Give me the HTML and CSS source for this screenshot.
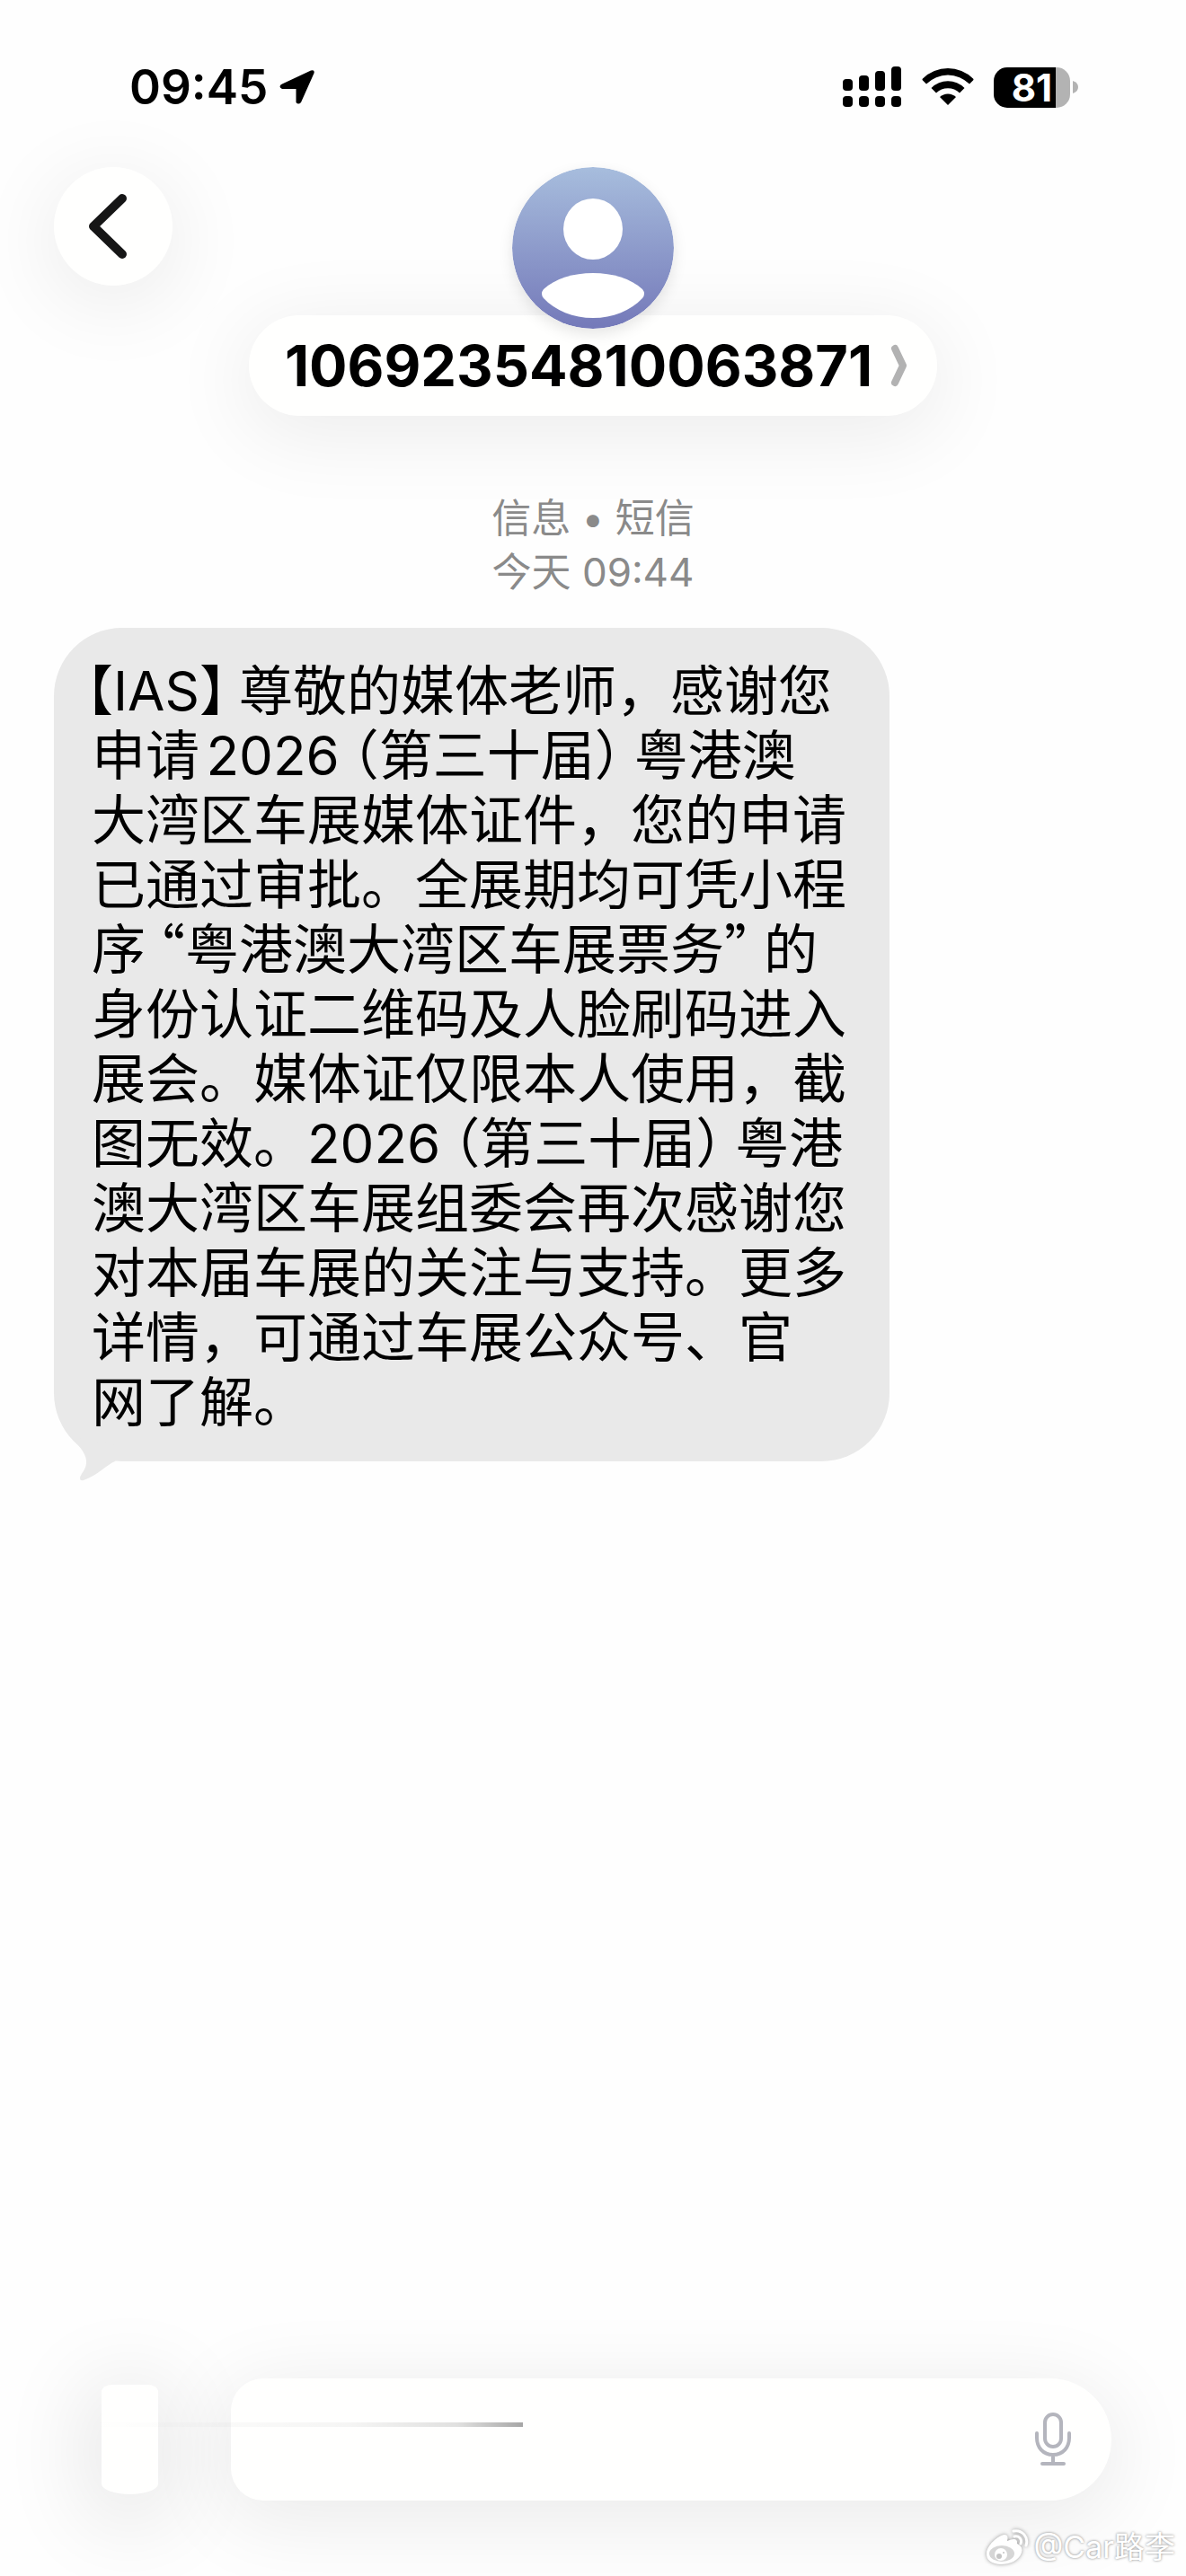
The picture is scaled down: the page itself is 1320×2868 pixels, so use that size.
FILE: index.html
```html
<!DOCTYPE html>
<html lang="zh-CN">
<head>
    <meta charset="UTF-8">
    <meta name="viewport" content="width=device-width, initial-scale=1.0">
    <title>信息</title>
    <link rel="stylesheet" href="styles.css">
</head>
<body>
    <div class="status-bar">
        <div class="status-left">
            <span class="time">09:45</span>
            <svg width="42" height="42" viewBox="0 0 42 42" aria-hidden="true">
                <path d="M4 17.500 36 2.500Q40.500 1 39.500 5.500L25 38Q22 41 19.500 38V23H4Q-1 20 4 17.500Z" fill="#000"/>
            </svg>
        </div>
        <div class="status-right">
            <svg width="66" height="46" viewBox="0 0 66 46" aria-hidden="true">
                <rect x="0" y="14" width="11" height="13" rx="4"/>
                <rect x="18" y="10" width="11" height="17" rx="4"/>
                <rect x="36" y="5" width="11" height="22" rx="4"/>
                <rect x="54" y="0" width="11" height="27" rx="4"/>
                <rect x="0" y="33" width="11" height="12" rx="4"/>
                <rect x="18" y="33" width="11" height="12" rx="4"/>
                <rect x="36" y="33" width="11" height="12" rx="4"/>
                <rect x="54" y="33" width="11" height="12" rx="4"/>
            </svg>
            <svg width="58" height="44" viewBox="0 0 58 44" aria-hidden="true">
                <path d="M1 12.500A40 40 0 0 1 57 12.500Q58 13.500 57 14.500L53 18.500A34 34 0 0 0 5 18.500L1 14.500Q0 13.500 1 12.500Z"/>
                <path d="M10.500 23A26 26 0 0 1 47.500 23L42 28.500A18.500 18.500 0 0 0 16 28.500Z"/>
                <path d="M20 33A13 13 0 0 1 38 33L29 42Z"/>
            </svg>
            <div class="battery">
                <span class="battery-level">81</span>
                <svg width="6" height="14" viewBox="0 0 6 14" aria-hidden="true"><path d="M0 0Q6 2 6 7T0 14Z" fill="#b3b3b3"/></svg>
            </div>
        </div>
    </div>

    <header class="chat-header">
        <button class="back" aria-label="返回">
            <svg width="44" height="74" viewBox="0 0 44 74" aria-hidden="true">
                <path d="M38 6 6 37 38 68" fill="none" stroke="#161616" stroke-width="10" stroke-linecap="round" stroke-linejoin="round"/>
            </svg>
        </button>
        <div class="contact">
            <svg class="avatar" width="180" height="180" viewBox="0 0 180 180" aria-hidden="true">
                <defs>
                    <linearGradient id="avatar-bg" x1="0" y1="0" x2="0" y2="1">
                        <stop offset="0" stop-color="#a7bddd"/>
                        <stop offset="1" stop-color="#7479b9"/>
                    </linearGradient>
                </defs>
                <circle cx="90" cy="90" r="90" fill="url(#avatar-bg)"/>
                <ellipse cx="90" cy="69" rx="33" ry="34" fill="#fff"/>
                <path d="M35 136C48 124 68 118 90 118S132 124 145 136Q149 141 145 146C132 160 112 168 90 168S48 160 35 146Q31 141 35 136Z" fill="#fff"/>
            </svg>
            <button class="contact-name">
                10692354810063871
                <svg width="20" height="48" viewBox="0 0 20 48" aria-hidden="true">
                    <path d="M5 5 14 24 5 43" fill="none" stroke="#b2b2b2" stroke-width="8" stroke-linecap="round" stroke-linejoin="round"/>
                </svg>
            </button>
        </div>
    </header>

    <main class="messages">
        <div class="stamp">信息 • 短信<br>今天 09:44</div>
        <div class="bubble">
            <span class="open hang">【</span>IAS<span class="close">】</span>尊敬的媒体老师，感谢您<br>
            申请2026<span class="open gap">（</span>第三十届<span class="close">）</span>粤港澳<br>
            大湾区车展媒体证件，您的申请<br>
            已通过审批。全展期均可凭小程<br>
            序<span class="open gap quote">“</span>粤港澳大湾区车展票务<span class="close quote">”</span>的<br>
            身份认证二维码及人脸刷码进入<br>
            展会。媒体证仅限本人使用，截<br>
            图无效。2026<span class="open gap">（</span>第三十届<span class="close">）</span>粤港<br>
            澳大湾区车展组委会再次感谢您<br>
            对本届车展的关注与支持。更多<br>
            详情，可通过车展公众号、官<br>
            网了解。
            <svg class="tail" width="56" height="50" viewBox="0 0 56 50" aria-hidden="true">
                <path d="M0 0C7 10 15 16 16 26C17 36 9 41 9 46Q9 49 13 48C30 42 38 31 48 27L56 10Z" fill="#e9e9e9"/>
            </svg>
        </div>
    </main>

    <footer class="composer">
        <button class="attach" aria-label="添加"></button>
        <div class="field">
            <input type="text" aria-label="短信">
            <button class="mic" aria-label="听写">
                <svg width="42" height="62" viewBox="0 0 42 62" fill="none" stroke="#b4b5bd" stroke-width="4" stroke-linecap="round" aria-hidden="true">
                    <rect x="12" y="3" width="18" height="36" rx="9"/>
                    <path d="M3 24V29C3 40 10 48 21 48S39 40 39 29V24M21 48V58M9 58H33"/>
                </svg>
            </button>
        </div>
        <span class="streak"></span>
    </footer>

    <div class="watermark">
        <svg width="50" height="42" viewBox="0 0 50 42" aria-hidden="true">
            <path d="M2 27C3 19 14 8 22 7Q27 7 25 14Q37 9 36 17Q43 20 41 27C38 36 28 40 18 40C8 40 1 35 2 27Z" fill="#fff"/>
            <ellipse cx="19" cy="28" rx="14" ry="9" fill="#d6d6d6"/>
            <circle cx="18" cy="29" r="7" fill="#fff"/>
            <circle cx="16" cy="31" r="3" fill="#c4c4c4"/>
            <circle cx="21" cy="27" r="1" fill="#c4c4c4"/>
            <path d="M32 3C42 1 49 10 46 19M33 9C38 8 42 12 40 17" fill="none" stroke="#fff" stroke-width="3" stroke-linecap="round"/>
        </svg>
        <span>@Car路李</span>
    </div>
</body>
</html>
```
FILE: styles.css
```css
* {
    box-sizing: border-box;
}
body {
    margin: 0;
    min-height: 100vh;
    display: flex;
    flex-direction: column;
    position: relative;
    overflow-x: hidden;
    background-color: #fefefe;
    color: #000;
    font-family: Inter, "Noto Sans CJK SC", sans-serif;
}
button, input {
    border: none;
    padding: 0;
    background: none;
    font: inherit;
    color: inherit;
    outline: none;
}
button {
    cursor: pointer;
}
svg {
    display: block;
}

/* status bar */
.status-bar {
    display: flex;
    justify-content: space-between;
    align-items: center;
    padding: 64px 120px 56px 144px;
}
.status-left {
    display: flex;
    align-items: center;
    gap: 12px;
}
.time {
    font-size: 53px;
    font-weight: 600;
    line-height: 66px;
}
.status-right {
    display: flex;
    align-items: center;
    gap: 22px;
}
.battery {
    display: flex;
    align-items: center;
    gap: 3px;
}
.battery-level {
    width: 85px;
    height: 45px;
    border-radius: 15px;
    background: linear-gradient(90deg, #000 81%, #b3b3b3 81%);
    color: #fff;
    font-size: 42px;
    font-weight: 700;
    line-height: 45px;
    text-align: center;
}

/* header */
.chat-header {
    display: grid;
    grid-template-columns: 1fr auto 1fr;
    align-items: start;
    padding: 0 60px;
}
.back {
    display: flex;
    align-items: center;
    justify-content: center;
    width: 132px;
    height: 132px;
    padding-right: 12px;
    border-radius: 50%;
    background-color: #fffffe;
    box-shadow: 0 16px 90px 8px rgba(0, 0, 0, 0.07);
}
.contact {
    display: flex;
    flex-direction: column;
    align-items: center;
}
.avatar {
    position: relative;
    border-radius: 50%;
    box-shadow: 0 6px 16px rgba(0, 0, 0, 0.1);
}
.contact-name {
    display: flex;
    align-items: center;
    gap: 20px;
    height: 112px;
    margin-top: -15px;
    padding: 0 32px 0 40px;
    border-radius: 56px;
    background-color: #fffffe;
    box-shadow: 0 16px 90px 8px rgba(0, 0, 0, 0.07);
    font-size: 63px;
    font-weight: 700;
}

/* messages */
.messages {
    flex: 1;
    padding: 84px 60px;
}
.stamp {
    margin-bottom: 32px;
    color: #8a8a8a;
    font-size: 44px;
    line-height: 60px;
    text-align: center;
}
.bubble {
    position: relative;
    width: fit-content;
    padding: 34px 48px 30px 42px;
    border-radius: 76px;
    background-color: #e9e9e9;
    font-size: 60px;
    line-height: 72px;
    text-autospace: normal;
    white-space: nowrap;
}
/* half-width punctuation with a little air outside */
.open, .close {
    font-feature-settings: "halt";
}
.close {
    margin-right: 14px;
}
.gap {
    margin-left: 14px;
}
.hang {
    margin-left: -6px;
}
.quote {
    font-family: "Noto Sans CJK SC", sans-serif;
    line-height: 1;
}
.tail {
    position: absolute;
    left: 20px;
    bottom: -23px;
}

/* composer */
.composer {
    position: relative;
    display: grid;
    grid-template-columns: 63px minmax(0, 1fr);
    align-items: center;
    gap: 81px;
    padding: 0 83px 84px 113px;
}
.attach {
    width: 63px;
    height: 122px;
    border-radius: 12px 12px 32px 32px / 8px 8px 12px 12px;
    background-color: #fffffe;
    box-shadow: 0 16px 90px 24px rgba(0, 0, 0, 0.08);
}
.field {
    display: flex;
    align-items: center;
    height: 136px;
    padding: 0 44px 0 36px;
    border-radius: 36px 68px 68px 36px;
    background-color: #fffffe;
    box-shadow: 0 16px 90px 8px rgba(0, 0, 0, 0.08);
}
.field input {
    flex: 1;
    min-width: 0;
    height: 100%;
    font-size: 60px;
}
.streak {
    position: absolute;
    top: 49px;
    left: 96px;
    width: 486px;
    height: 5px;
    background: linear-gradient(90deg, rgba(0, 0, 0, 0), rgba(0, 0, 0, 0.04) 60%, rgba(0, 0, 0, 0.12) 85%, rgba(0, 0, 0, 0.35));
}

/* watermark */
.watermark {
    position: absolute;
    right: 12px;
    bottom: 8px;
    display: flex;
    align-items: center;
    gap: 4px;
    color: #fff;
    font-size: 34px;
    line-height: 48px;
    text-shadow: 0 0 3px rgba(0, 0, 0, 0.5);
}
.watermark svg {
    filter: drop-shadow(0 0 2px rgba(0, 0, 0, 0.4));
}
```
